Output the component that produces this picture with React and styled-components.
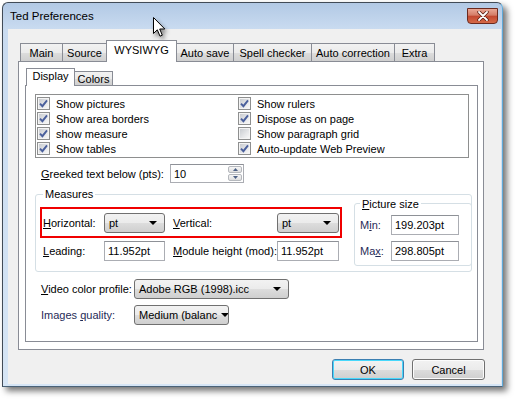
import styled, { createGlobalStyle } from "styled-components";

const Global = createGlobalStyle`
  html, body { margin: 0; padding: 0; background: #ffffff; }
  body {
    font-family: "Liberation Sans", Arial, sans-serif;
    font-size: 11px;
    color: #000;
  }
  #root { width: 517px; height: 401px; overflow: hidden; position: relative; }
`;

const Page = styled.div`
  padding: 2px 0 0 2px;
`;

const Window = styled.div`
  width: 501px;
  height: 385px;
  box-sizing: border-box;
  border: 1px solid #414b57;
  border-right-color: #5fa9d8;
  border-bottom-color: #4a6278;
  border-radius: 6px 6px 0 0;
  background: linear-gradient(#b2c9e5, #c9dbf0 26px, #d6e5f5);
  box-shadow: 4px 4px 6px rgba(0, 0, 0, 0.55);
  display: flex;
  flex-direction: column;
  padding: 0 1px 2px 5px;
`;

const TitleBar = styled.div`
  height: 26px;
  display: flex;
  align-items: flex-start;
  justify-content: space-between;
  padding-left: 2px;
`;

const Title = styled.div`
  font-size: 11.5px;
  line-height: 14px;
  margin-top: 6px;
`;

const CloseBtn = styled.div`
  width: 31px;
  height: 16px;
  box-sizing: border-box;
  margin: 5px 3px 0 0;
  border: 1px solid #6b2a1f;
  border-radius: 0 0 4px 4px;
  background: linear-gradient(#e9a795, #d47c66 45%, #c24730 50%, #d56a48);
  display: flex;
  align-items: center;
  justify-content: center;
`;

const Body = styled.div`
  flex: 1;
  background: #f0f0f0;
  padding: 11px 0 0 10px;
  display: flex;
  flex-direction: column;
`;

const TabStrip = styled.div`
  display: flex;
  align-items: flex-end;
  height: ${(p) => p.$h}px;
  margin-bottom: -1px;
  padding-left: ${(p) => p.$pad}px;
  position: relative;
  z-index: 1;
`;

const Tab = styled.div`
  box-sizing: border-box;
  width: ${(p) => p.$w}px;
  height: ${(p) => (p.$active ? p.$h : p.$h - 4)}px;
  margin-right: -1px;
  margin-bottom: ${(p) => (p.$active ? 0 : 1)}px;
  border: 1px solid #898c95;
  border-bottom: none;
  background: ${(p) =>
    p.$active ? "#ffffff" : "linear-gradient(#f2f2f2, #ebebeb 50%, #dddddd 51%, #cfcfcf)"};
  display: flex;
  align-items: center;
  justify-content: center;
  padding-bottom: ${(p) => (p.$active ? 3 : 0)}px;
  position: relative;
  z-index: ${(p) => (p.$active ? 2 : 1)};
  white-space: nowrap;
`;

const Panel = styled.div`
  width: ${(p) => p.$w}px;
  box-sizing: border-box;
  background: #fff;
  border: 1px solid #898c95;
  padding: ${(p) => p.$pad};
  display: flex;
  flex-direction: column;
`;

const Content = styled.div`
  height: 247px;
  padding: 8px 0 0 9px;
  display: flex;
  flex-direction: column;
`;

const CheckGroup = styled.div`
  width: 434px;
  height: 64px;
  box-sizing: border-box;
  border: 1px solid #8e8f8f;
  padding: 1px 0 0 1px;
  display: grid;
  grid-template-columns: 201px 1fr;
  grid-auto-rows: 15px;
`;

const CheckRow = styled.div`
  display: flex;
  align-items: center;
  gap: 6px;
  white-space: nowrap;
`;

const Box = styled.span`
  width: 13px;
  height: 13px;
  box-sizing: border-box;
  border: 1px solid #8e8f8f;
  background: #f4f4f4;
  padding: 1px;
  display: flex;
  flex-shrink: 0;
`;

const BoxInner = styled.span`
  flex: 1;
  background: linear-gradient(135deg, #c9ccd1, #e6e7e9 60%, #f7f7f7);
  display: flex;
  align-items: center;
  justify-content: center;
`;

const Row = styled.div`
  display: flex;
  align-items: center;
  margin: ${(p) => p.$m};
`;

const Label = styled.span`
  width: ${(p) => (p.$w ? `${p.$w}px` : "auto")};
  flex-shrink: 0;
  color: ${(p) => (p.$navy ? "#1f2b57" : "#000")};
  white-space: nowrap;
`;

const TextBox = styled.div`
  width: ${(p) => p.$w}px;
  height: ${(p) => p.$h || 20}px;
  box-sizing: border-box;
  border: 1px solid #abadb3;
  border-top-color: #8e9197;
  background: #fff;
  padding-left: 3px;
  display: flex;
  align-items: center;
  position: relative;
  flex-shrink: 0;
`;

const Spin = styled.div`
  margin-left: auto;
  width: 15px;
  height: 100%;
  display: flex;
  flex-direction: column;
  gap: 1px;
  padding: 1px 1px 1px 0;
  box-sizing: border-box;
`;

const SpinHalf = styled.div`
  flex: 1;
  border: 1px solid #b5b8bd;
  border-radius: 2px;
  background: linear-gradient(#f6f6f6, #dedede);
  display: flex;
  align-items: center;
  justify-content: center;
`;

const Combo = styled.div`
  width: ${(p) => p.$w}px;
  height: ${(p) => p.$h || 20}px;
  box-sizing: border-box;
  border: 1px solid #707070;
  border-radius: 3px;
  background: linear-gradient(#f2f2f2, #ebebeb 50%, #dddddd 51%, #cfcfcf);
  padding: 0 7px 0 4px;
  display: flex;
  align-items: center;
  justify-content: space-between;
  flex-shrink: 0;
  white-space: nowrap;
  overflow: hidden;
`;

const Arrow = styled.span`
  width: 0;
  height: 0;
  border-left: 4px solid transparent;
  border-right: 4px solid transparent;
  border-top: 4px solid #000;
  flex-shrink: 0;
  margin-left: 4px;
`;

const Group = styled.div`
  width: ${(p) => p.$w}px;
  height: ${(p) => (p.$h ? `${p.$h}px` : "auto")};
  box-sizing: border-box;
  border: 1px solid #d5dfe5;
  border-radius: 3px;
  margin: ${(p) => p.$m};
  padding: ${(p) => p.$pad};
  flex-shrink: 0;
`;

const Legend = styled.div`
  display: table;
  line-height: 13px;
  margin: ${(p) => p.$top}px 0 0 ${(p) => p.$left}px;
  padding: 0 2px;
  background: #fff;
`;

const MeasuresBody = styled.div`
  display: flex;
  align-items: flex-start;
`;

const MeasuresLeft = styled.div`
  margin: 6px 0 0 4px;
`;

const FieldGrid = styled.div`
  display: grid;
  grid-template-columns: 61px 61px 8px 104px 62px;
  align-items: center;
`;

const RedBox = styled.div`
  width: 302px;
  height: 31px;
  box-sizing: border-box;
  border: 2px solid #f00000;
  padding-left: 1px;
  display: flex;
  align-items: center;
`;

const ButtonRow = styled.div`
  display: flex;
  justify-content: flex-end;
  gap: 8px;
  margin: 9px 16px 0 0;
`;

const Button = styled.div`
  width: ${(p) => p.$w}px;
  height: 21px;
  box-sizing: border-box;
  border: 1px solid ${(p) => (p.$default ? "#3c7fb1" : "#707070")};
  border-radius: 3px;
  box-shadow: ${(p) => (p.$default ? "inset 0 0 0 1px #48d8fb" : "inset 0 0 0 1px #fcfcfc")};
  background: linear-gradient(#f2f2f2, #ebebeb 50%, #dddddd 51%, #cfcfcf);
  display: flex;
  align-items: center;
  justify-content: center;
`;

const Cursor = styled.svg`
  position: absolute;
  left: 153px;
  top: 17px;
  filter: drop-shadow(2px 3px 2px rgba(0, 0, 0, 0.45));
`;

const Check = ({ on }) => (
  <Box>
    <BoxInner>
      {on && (
        <svg width="9" height="9" viewBox="0 0 9 9">
          <path d="M1 4.6 L3.4 7.2 L8 1.4" fill="none" stroke="#4a5f9c" strokeWidth="1.9" />
        </svg>
      )}
    </BoxInner>
  </Box>
);

const checks = [
  ["Show pictures", true],
  ["Show rulers", true],
  ["Show area borders", true],
  ["Dispose as on page", true],
  ["show measure", true],
  ["Show paragraph grid", false],
  ["Show tables", true],
  ["Auto-update Web Preview", true],
];

const outerTabs = [
  ["Main", 43],
  ["Source", 45],
  ["WYSIWYG", 71, true],
  ["Auto save", 58],
  ["Spell checker", 79],
  ["Auto correction", 84],
  ["Extra", 41],
];

export default function App() {
  return (
    <>
      <Global />
      <Page>
        <Window>
          <TitleBar>
            <Title>Ted Preferences</Title>
            <CloseBtn>
              <svg width="12" height="10" viewBox="0 0 12 10">
                <path d="M2 1 L10 9 M10 1 L2 9" stroke="#5a1d12" strokeWidth="3.4" strokeLinecap="round" />
                <path d="M2 1 L10 9 M10 1 L2 9" stroke="#ffffff" strokeWidth="1.8" strokeLinecap="round" />
              </svg>
            </CloseBtn>
          </TitleBar>
          <Body>
            <TabStrip $h={22} $pad={2}>
              {outerTabs.map(([t, w, a]) => (
                <Tab key={t} $w={w} $h={22} $active={a}>
                  {t}
                </Tab>
              ))}
            </TabStrip>
            <Panel $w={466} $pad="6px 5px 7px 6px">
              <TabStrip $h={18} $pad={1}>
                <Tab $w={49} $h={18} $active>
                  Display
                </Tab>
                <Tab $w={39} $h={18}>
                  Colors
                </Tab>
              </TabStrip>
              <Panel $w={453} $pad="0">
                <Content>
                  <CheckGroup>
                    {checks.map(([t, on]) => (
                      <CheckRow key={t}>
                        <Check on={on} />
                        {t}
                      </CheckRow>
                    ))}
                  </CheckGroup>

                  <Row $m="6px 0 0 6px">
                    <Label $w={129}>
                      <u>G</u>reeked text below (pts):
                    </Label>
                    <TextBox $w={74} $h={19}>
                      10
                      <Spin>
                        <SpinHalf>
                          <svg width="5" height="3" viewBox="0 0 5 3">
                            <path d="M0 3 L2.5 0 L5 3 Z" fill="#4d6185" />
                          </svg>
                        </SpinHalf>
                        <SpinHalf>
                          <svg width="5" height="3" viewBox="0 0 5 3">
                            <path d="M0 0 L2.5 3 L5 0 Z" fill="#4d6185" />
                          </svg>
                        </SpinHalf>
                      </Spin>
                    </TextBox>
                  </Row>

                  <Group $w={437} $m="11px 0 0 0" $pad="0 0 5px 0">
                    <Legend $top={-7} $left={7}>Measures</Legend>
                    <MeasuresBody>
                      <MeasuresLeft>
                        <RedBox>
                          <FieldGrid>
                            <Label>
                              <u>H</u>orizontal:
                            </Label>
                            <Combo $w={61}>
                              pt
                              <Arrow />
                            </Combo>
                            <span />
                            <Label>
                              <u>V</u>ertical:
                            </Label>
                            <Combo $w={62}>
                              pt
                              <Arrow />
                            </Combo>
                          </FieldGrid>
                        </RedBox>
                        <Row $m="3px 0 0 3px">
                          <FieldGrid>
                            <Label>
                              <u>L</u>eading:
                            </Label>
                            <TextBox $w={61}>11.952pt</TextBox>
                            <span />
                            <Label>
                              <u>M</u>odule height (mod):
                            </Label>
                            <TextBox $w={62}>11.952pt</TextBox>
                          </FieldGrid>
                        </Row>
                      </MeasuresLeft>
                      <Group $w={118} $h={63} $m="2px 0 0 12px" $pad="0 0 0 5px">
                        <Legend $top={-6} $left={0}>
                          <u>P</u>icture size
                        </Legend>
                        <Row $m="4px 0 0 0">
                          <Label $w={31} $navy>
                            M<u>i</u>n:
                          </Label>
                          <TextBox $w={68}>199.203pt</TextBox>
                        </Row>
                        <Row $m="6px 0 0 0">
                          <Label $w={31} $navy>
                            Ma<u>x</u>:
                          </Label>
                          <TextBox $w={68}>298.805pt</TextBox>
                        </Row>
                      </Group>
                    </MeasuresBody>
                  </Group>

                  <Row $m="7px 0 0 6px">
                    <Label $w={93}>
                      <u>V</u>ideo color profile:
                    </Label>
                    <Combo $w={155}>
                      Adobe RGB (1998).icc
                      <Arrow />
                    </Combo>
                  </Row>
                  <Row $m="6px 0 0 6px">
                    <Label $w={93} $navy>
                      Images <u>q</u>uality:
                    </Label>
                    <Combo $w={95}>
                      Medium (balanc
                      <Arrow />
                    </Combo>
                  </Row>
                </Content>
              </Panel>
            </Panel>
            <ButtonRow>
              <Button $w={72} $default>
                OK
              </Button>
              <Button $w={73}>Cancel</Button>
            </ButtonRow>
          </Body>
        </Window>
        <Cursor width="14" height="21" viewBox="0 0 14 21">
          <path d="M0.5 0.5 L0.5 16.5 L4.3 12.8 L7 19.2 L9.3 18.2 L6.7 12 L11.8 12 Z" fill="#fff" stroke="#000" strokeWidth="1" strokeLinejoin="round" />
        </Cursor>
      </Page>
    </>
  );
}
